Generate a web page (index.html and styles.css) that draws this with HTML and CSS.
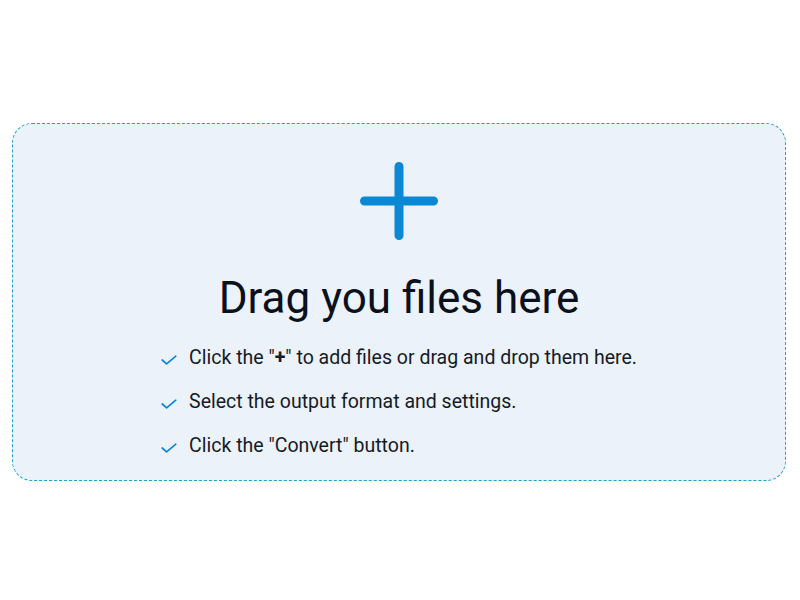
FILE: index.html
```html
<!DOCTYPE html>
<html>
<head>
<meta charset="utf-8">
<link rel="stylesheet" href="styles.css">
</head>
<body>
<div class="page">
  <div class="drop">
    <svg class="plus" width="80" height="80" viewBox="0 0 80 80">
      <path d="M40 5.5 V74.5 M5.5 40 H74.5" stroke="#0a87d5" stroke-width="9" stroke-linecap="round" fill="none"/>
    </svg>
    <h1 class="title">Drag you files here</h1>
    <ul class="steps">
      <li><svg class="check" width="16" height="10" viewBox="0 0 16 10"><path d="M1.2 5 L5.6 8.8 L14.8 1.2" stroke="#0a87d5" stroke-width="1.7" fill="none" stroke-linecap="round" stroke-linejoin="round"/></svg><span>Click the "<b>+</b>" to add files or drag and drop them here.</span></li>
      <li><svg class="check" width="16" height="10" viewBox="0 0 16 10"><path d="M1.2 5 L5.6 8.8 L14.8 1.2" stroke="#0a87d5" stroke-width="1.7" fill="none" stroke-linecap="round" stroke-linejoin="round"/></svg><span>Select the output format and settings.</span></li>
      <li><svg class="check" width="16" height="10" viewBox="0 0 16 10"><path d="M1.2 5 L5.6 8.8 L14.8 1.2" stroke="#0a87d5" stroke-width="1.7" fill="none" stroke-linecap="round" stroke-linejoin="round"/></svg><span>Click the "Convert" button.</span></li>
    </ul>
  </div>
</div>
</body>
</html>
```
FILE: styles.css
```css
html, body {
  margin: 0;
  padding: 0;
  background: #ffffff;
}
.page {
  padding: 123px 14px 0 12px;
  font-family: Roboto, "Liberation Sans", sans-serif;
}
.drop {
  box-sizing: border-box;
  height: 358px;
  border: 1px dashed #1ea3c9;
  border-radius: 20px;
  background: #ebf2f9;
  display: flex;
  flex-direction: column;
  align-items: center;
  padding-top: 37px;
}
.plus {
  display: block;
}
.title {
  margin: 31px 0 0 0;
  font-size: 44px;
  font-weight: 400;
  line-height: 52px;
  color: #0b101d;
}
.steps {
  list-style: none;
  margin: 22px 0 0 0;
  padding: 0;
  display: flex;
  flex-direction: column;
  gap: 20px;
}
.steps li {
  display: flex;
  align-items: center;
  gap: 12px;
  font-size: 19.5px;
  line-height: 24px;
  color: #161b27;
}
.check {
  display: block;
  margin-top: 4px;
}
.steps b {
  font-weight: 700;
}
```
